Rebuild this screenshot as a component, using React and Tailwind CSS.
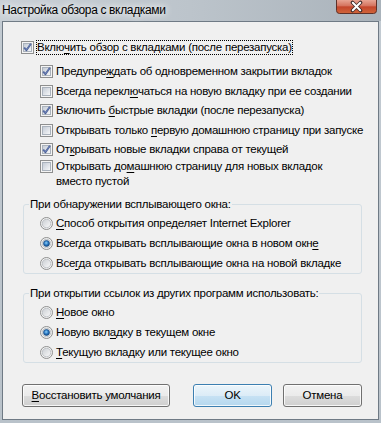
import React from 'react'

function Key({ text, k }) {
  if (k === undefined || k < 0) return <>{text}</>
  return (
    <>
      {text.slice(0, k)}
      <u className="underline-offset-[2px]">{text[k]}</u>
      {text.slice(k + 1)}
    </>
  )
}

function CheckBox({ checked }) {
  return (
    <span className="relative mt-[1px] block w-[13px] h-[13px] shrink-0 border border-[#8e8f8f] bg-[#f4f4f4] p-[1px]">
      <span className="block w-full h-full border border-[#aab2bc] bg-gradient-to-br from-[#c5ccd6] to-[#f6f7f8]" />
      {checked && (
        <svg className="absolute left-0 top-0" width="11" height="11" viewBox="0 0 11 11">
          <path d="M2.2 5.6 L4.4 8.2 L8.9 1.8" fill="none" stroke="#4a5f97" strokeWidth="1.9" strokeLinejoin="round" />
          <path d="M2.6 5.9 L4.4 8.0 L8.5 2.2" fill="none" stroke="#7f93c6" strokeWidth="0.6" />
        </svg>
      )}
    </span>
  )
}

function Radio({ checked }) {
  return (
    <svg className="mt-[1px] shrink-0" width="13" height="13" viewBox="0 0 13 13">
      <defs>
        <linearGradient id="rbg" x1="0" y1="0" x2="1" y2="1">
          <stop offset="0" stopColor="#c9cdd2" />
          <stop offset="1" stopColor="#fbfbfb" />
        </linearGradient>
        <radialGradient id="rdot" cx="0.45" cy="0.4" r="0.6">
          <stop offset="0" stopColor="#8fd0f6" />
          <stop offset="0.55" stopColor="#2a79c4" />
          <stop offset="1" stopColor="#12467c" />
        </radialGradient>
      </defs>
      <circle cx="6.5" cy="6.5" r="6" fill="#f4f4f4" stroke="#8e8f8f" strokeWidth="1" />
      <circle cx="6.5" cy="6.5" r="4.3" fill="url(#rbg)" stroke="#b4b8bd" strokeWidth="0.8" />
      {checked && <circle cx="6.5" cy="6.5" r="3" fill="url(#rdot)" stroke="#1b4f86" strokeWidth="0.6" />}
    </svg>
  )
}

function CheckRow({ checked, text, k, className = '', focus }) {
  return (
    <div className={'flex items-start gap-[2px] ' + className}>
      <CheckBox checked={checked} />
      <span className={'leading-[15px] px-[1px] whitespace-nowrap ' + (focus ? 'outline outline-1 outline-dotted outline-black -outline-offset-1' : '')}>
        {text.map((t, i) => (
          <span key={i} className="block">
            <Key text={t} k={i === 0 ? k : -1} />
          </span>
        ))}
      </span>
    </div>
  )
}

function RadioRow({ checked, text, k, className = '' }) {
  return (
    <div className={'flex items-start gap-[2px] ' + className}>
      <Radio checked={checked} />
      <span className="leading-[15px] px-[1px] whitespace-nowrap">
        <Key text={text} k={k} />
      </span>
    </div>
  )
}

function Group({ title, items, className = '' }) {
  return (
    <fieldset className={'ml-[20px] w-[339px] rounded-[3px] border border-[#d5dfe5] pb-[2px] ' + className}>
      <legend className="ml-[5px] px-[1px] leading-[15px] whitespace-nowrap">{title}</legend>
      <div className="pl-[16px] pt-[4px] flex flex-col gap-[5px]">
        {items.map((it, i) => (
          <RadioRow key={i} checked={it.checked} text={it.text} k={it.k} />
        ))}
      </div>
    </fieldset>
  )
}

const OPTIONS = [
  { checked: true, text: ['Предупреждать об одновременном закрытии вкладок'], k: 8 },
  { checked: false, text: ['Всегда переключаться на новую вкладку при ее создании'], k: 13 },
  { checked: true, text: ['Включить быстрые вкладки (после перезапуска)'], k: 9 },
  { checked: false, text: ['Открывать только первую домашнюю страницу при запуске'], k: 17 },
  { checked: true, text: ['Открывать новые вкладки справа от текущей'], k: 2 },
  { checked: false, text: ['Открывать домашнюю страницу для новых вкладок', 'вместо пустой'], k: 12 },
]

const POPUP = [
  { checked: false, text: 'Способ открытия определяет Internet Explorer', k: 0 },
  { checked: true, text: 'Всегда открывать всплывающие окна в новом окне', k: 45 },
  { checked: false, text: 'Всегда открывать всплывающие окна на новой вкладке', k: 3 },
]

const LINKS = [
  { checked: false, text: 'Новое окно', k: 0 },
  { checked: true, text: 'Новую вкладку в текущем окне', k: 9 },
  { checked: false, text: 'Текущую вкладку или текущее окно', k: 0 },
]

const btn =
  'h-[23px] rounded-[3px] border text-black leading-[15px] shadow-[inset_0_0_0_1px_rgba(255,255,255,0.8)]'

export default function App() {
  return (
    <div className="w-[381px] h-[423px] overflow-hidden flex flex-col bg-gradient-to-b from-[#c3cbd2] to-[#b9c2ca] font-['Liberation_Sans',Arial,sans-serif] text-[11.5px] tracking-[-0.25px] text-black">
      {/* Title bar */}
      <div className="relative h-[21px] shrink-0 flex items-center pl-[2px] bg-gradient-to-r from-[#c9d0d6] via-[#bcc4cb] to-[#aab3bb]">
        <span className="text-[12px] tracking-[-0.35px] leading-[15px] [text-shadow:0_0_6px_#ffffff,0_0_10px_rgba(255,255,255,0.8)]">
          Настройка обзора с вкладками
        </span>
        <svg className="absolute right-[4px] top-0" width="41" height="14" viewBox="0 0 41 14">
          <defs>
            <linearGradient id="cls" x1="0" y1="0" x2="0" y2="1">
              <stop offset="0" stopColor="#e8a493" />
              <stop offset="0.45" stopColor="#d4715c" />
              <stop offset="0.5" stopColor="#c4452c" />
              <stop offset="1" stopColor="#d0663a" />
            </linearGradient>
          </defs>
          <path d="M0.5 0 V10.5 Q0.5 13.5 3.5 13.5 H37.5 Q40.5 13.5 40.5 10.5 V0" fill="url(#cls)" stroke="#5e3129" />
          <path d="M16.5 2.5 L24.5 10.5 M24.5 2.5 L16.5 10.5" stroke="#3c2a2a" strokeWidth="3.6" strokeLinecap="round" />
          <path d="M16.8 2.8 L24.2 10.2 M24.2 2.8 L16.8 10.2" stroke="#ffffff" strokeWidth="2" strokeLinecap="round" />
        </svg>
      </div>

      {/* Client */}
      <div className="flex-1 mx-[2px] mb-[3px] border border-[#6f7a85] bg-[#f0f0f0] flex flex-col">
        <CheckRow className="ml-[18px] mt-[18px]" checked text={['Включить обзор с вкладками (после перезапуска)']} k={4} focus />

        <div className="ml-[37px] mt-[9px] flex flex-col gap-[4.5px]">
          {OPTIONS.map((o, i) => (
            <CheckRow key={i} checked={o.checked} text={o.text} k={o.k} className={i === 5 ? '-mt-[3px]' : ''} />
          ))}
        </div>

        <Group className="mt-[8px]" title="При обнаружении всплывающего окна:" items={POPUP} />
        <Group className="mt-[12px]" title="При открытии ссылок из других программ использовать:" items={LINKS} />

        <div className="mt-[21px] ml-[19px] flex items-center">
          <button className={btn + ' w-[148px] border-[#707070] bg-[linear-gradient(#f2f2f2,#ebebeb_50%,#dddddd_50%,#cfcfcf)]'}>
            <Key text="Восстановить умолчания" k={0} />
          </button>
          <button className={btn + ' ml-[23px] w-[79px] border-[#3c7fb1] bg-[linear-gradient(#ecf5fb,#dcecf7_50%,#c7e2f4_50%,#b5d7ee)]'}>
            OK
          </button>
          <button className={btn + ' ml-[11px] w-[79px] border-[#707070] bg-[linear-gradient(#f2f2f2,#ebebeb_50%,#dddddd_50%,#cfcfcf)]'}>
            Отмена
          </button>
        </div>
      </div>
    </div>
  )
}
